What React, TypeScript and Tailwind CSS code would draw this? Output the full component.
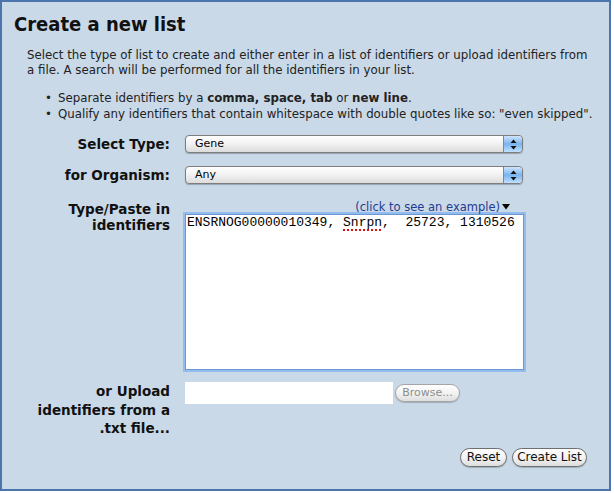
import React from 'react'

const Label = ({ children, className = '' }: { children: React.ReactNode; className?: string }) => (
    <div className={`w-[168px] shrink-0 text-right text-[13.5px] font-bold text-[#111] ${className}`}>{children}</div>
)

const AquaSelect = ({ value }: { value: string }) => (
    <div className="flex h-[18px] w-[338px] items-stretch rounded-[4px] border border-[#7d7d7d] bg-gradient-to-b from-white via-[#f1f1f1] to-[#dcdcdc] shadow-[0_1px_1px_rgba(0,0,0,0.25)]">
        <div className="flex-1 pl-[9px] text-[11px] leading-[16px] text-black">{value}</div>
        <div className="flex w-[19px] flex-col items-center justify-center rounded-r-[4px] border-l border-[#6b8ab7] bg-gradient-to-b from-[#cfe4fb] via-[#79b3f0] to-[#bfe0ff]">
            <svg width="7" height="11" viewBox="0 0 7 11">
                <path d="M3.5 0.5 L6.5 4 L0.5 4 Z" fill="#111" />
                <path d="M0.5 7 L6.5 7 L3.5 10.5 Z" fill="#111" />
            </svg>
        </div>
    </div>
)

const PillButton = ({ children, className = '' }: { children: React.ReactNode; className?: string }) => (
    <div className={`flex items-center justify-center rounded-full border bg-gradient-to-b from-white via-[#f3f3f3] to-[#dedede] leading-[16px] shadow-[0_1px_1px_rgba(0,0,0,0.2)] ${className}`}>
        {children}
    </div>
)

const App = () => {
    return (
        <div className="h-[493px] w-[614px] bg-white font-['DejaVu_Sans',sans-serif]">
            <div className="h-[491px] w-[611px] border-2 border-[#4c75ab] bg-[#c9d9e8] pt-[10px]">
                <h1 className="pl-[12px] font-['DejaVu_Sans_Condensed','DejaVu_Sans',sans-serif] text-[20px] font-bold leading-[24px] text-[#111]">
                    Create a new list
                </h1>

                <p className="mt-[12px] whitespace-nowrap pl-[25px] text-[11.8px] leading-[15px] text-[#222]">
                    Select the type of list to create and either enter in a list of identifiers or upload identifiers from
                    <br />
                    a file. A search will be performed for all the identifiers in your list.
                </p>

                <ul className="mt-[12px] pl-[43px] text-[11.8px] leading-[16px] text-[#222]">
                    <li className="flex gap-[6px]">
                        <span>•</span>
                        <span>
                            Separate identifiers by a <b>comma, space, tab</b> or <b>new line</b>.
                        </span>
                    </li>
                    <li className="flex gap-[6px]">
                        <span>•</span>
                        <span className="whitespace-nowrap">
                            Qualify any identifiers that contain whitespace with double quotes like so: "even skipped".
                        </span>
                    </li>
                </ul>

                <div className="mt-[13px] flex items-center">
                    <Label className="leading-[18px]">Select Type:</Label>
                    <div className="ml-[15px]">
                        <AquaSelect value="Gene" />
                    </div>
                </div>

                <div className="mt-[13px] flex items-center">
                    <Label className="leading-[18px]">for Organism:</Label>
                    <div className="ml-[15px]">
                        <AquaSelect value="Any" />
                    </div>
                </div>

                <div className="mt-[16px] flex items-start">
                    <Label className="pt-[1px] leading-[16px]">
                        Type/Paste in
                        <br />
                        identifiers
                    </Label>
                    <div className="ml-[16px] w-[337px]">
                        <div className="flex h-[14px] items-center justify-end pr-[12px] text-[11.5px] leading-[14px] text-[#1f3b92]">
                            (click to see an example)
                            <svg width="10" height="8" viewBox="0 0 10 8" className="ml-[1px]">
                                <path d="M1 1 L9 1 L5 6.5 Z" fill="#000" />
                            </svg>
                        </div>
                        <div className="mt-[1px] h-[154px] w-[337px] bg-white px-[1px] font-['Liberation_Mono',monospace] text-[13px] leading-[15px] text-black shadow-[0_0_0_1px_#6a98d6,0_0_0_3px_#94bbee]">
                            ENSRNOG00000010349,{' '}
                            <span className="underline decoration-[#d11] decoration-dotted decoration-[2px] underline-offset-[3px]">Snrpn</span>
                            ,&nbsp;&nbsp;25723, 1310526
                        </div>
                    </div>
                </div>

                <div className="mt-[13px] flex items-start">
                    <Label className="leading-[18.5px]">
                        or Upload
                        <br />
                        identifiers from a
                        <br />
                        .txt file...
                    </Label>
                    <div className="ml-[15px] flex items-start">
                        <div className="h-[22px] w-[208px] bg-white" />
                        <PillButton className="ml-[2px] mt-[2px] h-[18px] w-[65px] border-[#a5a5a5] text-[11px] text-[#8c8c8c]">
                            Browse...
                        </PillButton>
                    </div>
                </div>

                <div className="mt-[10px] flex justify-end gap-[5px] pr-[22px]">
                    <PillButton className="h-[19px] w-[47px] border-[#6f6f6f] text-[12px] text-[#111]">Reset</PillButton>
                    <PillButton className="h-[19px] w-[75px] border-[#6f6f6f] text-[12px] text-[#111]">Create List</PillButton>
                </div>
            </div>
        </div>
    )
}

export default App
